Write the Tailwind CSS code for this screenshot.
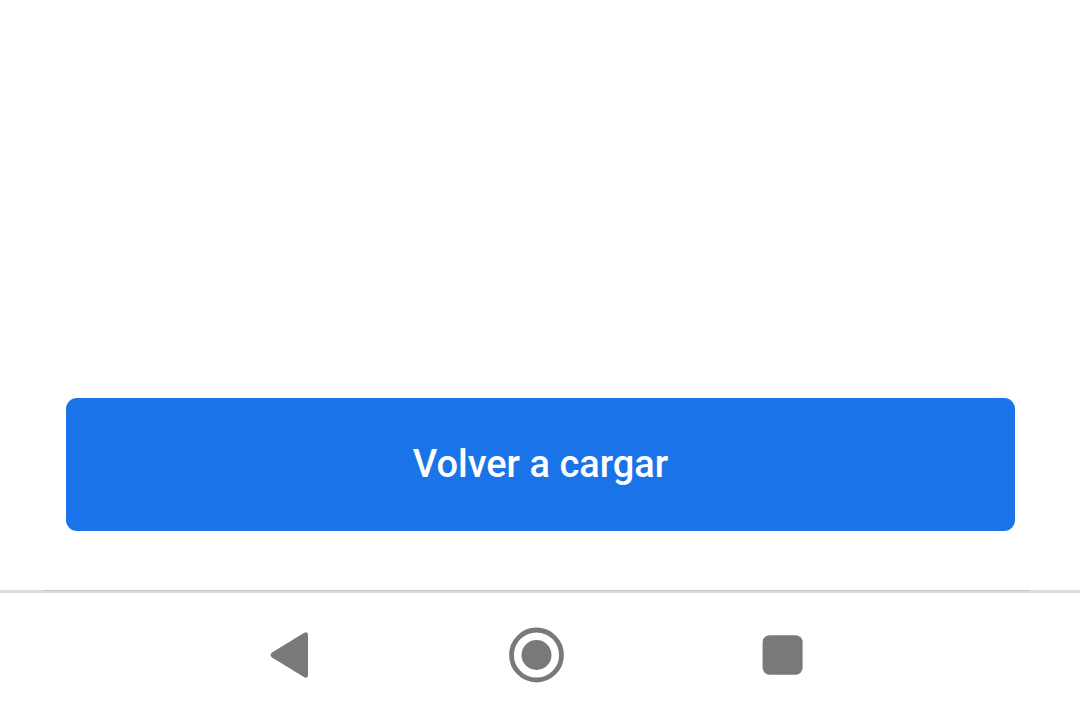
<!DOCTYPE html>
<html lang="es">
<head>
<meta charset="utf-8">
<meta name="viewport" content="width=device-width, initial-scale=1">
<title>Volver a cargar</title>
<script src="https://cdn.jsdelivr.net/npm/@tailwindcss/browser@4"></script>
</head>
<body class="flex min-h-screen flex-col bg-white font-['Roboto',sans-serif]">
<main class="flex flex-1 flex-col justify-end pr-[65px] pb-[59px] pl-[66px]">
<button type="button" class="h-[133px] w-full rounded-[11px] bg-[#1a73e8] pb-0.5 text-[38px] leading-[48px] font-medium text-white">Volver a cargar</button>
</main>
<div class="flex h-[3px] flex-col bg-[#dedede]"><div class="mr-[50px] ml-[44px] h-px bg-[#c4c4c4]"></div></div>
<nav class="flex h-[127px] justify-center gap-[190px] pr-1.5 pt-[34px]" aria-label="Navegación">
<button type="button" aria-label="Atrás" class="size-14"><svg class="size-14" viewBox="0 0 56 56" fill="#797979"><path d="M45 8V48Q45 52 41.300 50.200L9 30.500Q6 28 9 25.500L41.300 5.800Q45 4 45 8Z"/></svg></button>
<button type="button" aria-label="Inicio" class="size-14"><svg class="size-14" viewBox="0 0 56 56" fill="#797979"><circle cx="27.500" cy="28" r="25" fill="none" stroke="#797979" stroke-width="4.800"/><circle cx="27.500" cy="28" r="15"/></svg></button>
<button type="button" aria-label="Recientes" class="size-14"><svg class="size-14" viewBox="0 0 56 56" fill="#797979"><rect x="7.600" y="8.300" width="40" height="39.500" rx="7"/></svg></button>
</nav>
</body>
</html>
